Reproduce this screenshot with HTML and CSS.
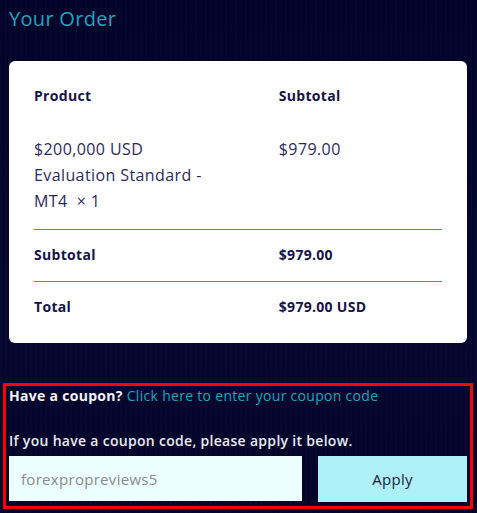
FILE: index.html
```html
<!DOCTYPE html>
<html lang="en">
<head>
  <meta charset="UTF-8" />
  <meta name="viewport" content="width=device-width, initial-scale=1.0"/>
  <title>Your Order</title>
  <link rel="stylesheet" href="styles.css">
</head>
<body>

  <h3 class="order-title">Your Order</h3>

  <div class="order-card">
    <table class="order-table">
      <thead>
        <tr>
          <th class="col-product">Product</th>
          <th class="col-total">Subtotal</th>
        </tr>
      </thead>
      <tbody>
        <tr class="item-row">
          <td>$200,000 USD Evaluation Standard - MT4&nbsp; ×&nbsp;1</td>
          <td>$979.00</td>
        </tr>
      </tbody>
      <tfoot>
        <tr>
          <th>Subtotal</th>
          <td>$979.00</td>
        </tr>
        <tr>
          <th>Total</th>
          <td>$979.00 USD</td>
        </tr>
      </tfoot>
    </table>
  </div>

  <div class="coupon">
    <p class="coupon-toggle">Have a coupon? <a href="#">Click here to enter your coupon code</a></p>
    <p class="coupon-hint">If you have a coupon code, please apply it below.</p>
    <div class="coupon-form">
      <input type="text" placeholder="forexpropreviews5" />
      <button type="button">Apply</button>
    </div>
  </div>

</body>
</html>
```

FILE: styles.css
```css
* { box-sizing: border-box; }

body {
  margin: 0;
  font-family: "Open Sans", sans-serif;
  letter-spacing: 0.3px;
  background: #04042a;
  background-image:
    repeating-linear-gradient(90deg, rgba(255,255,255,0.012) 0 2px, transparent 2px 5px),
    linear-gradient(180deg, #03032a 0%, #05062f 60%, #04042a 100%);
  color: #ffffff;
  min-height: 513px;
}

.order-title {
  margin: 0;
  padding: 4px 9px 0;
  height: 61px;
  font-size: 20px;
  line-height: 30px;
  font-weight: 400;
  color: #19a7bf;
}

.order-card {
  background: #ffffff;
  margin: 0 10px 0 9px;
  padding: 9px 25px 10px;
  border-radius: 6px;
  color: #1b1a50;
}

.order-table {
  width: 100%;
  border-collapse: collapse;
  text-align: left;
}

.order-table th,
.order-table td {
  padding: 13px 0;
  vertical-align: top;
}

.order-table thead th {
  font-size: 14px;
  line-height: 26px;
  font-weight: 700;
  color: #15144a;
}

.col-product { width: 60%; }

.item-row td {
  padding: 14px 0 15px;
  font-size: 16px;
  line-height: 26px;
  letter-spacing: 0.4px;
  color: #2b2a5e;
}

.item-row td:first-child { padding-right: 60px; }

.order-table tfoot th,
.order-table tfoot td {
  border-top: 1px solid #1aa6b8;
  padding: 12px 0 13px;
  font-size: 14px;
  line-height: 26px;
  font-weight: 700;
  color: #15144a;
}

.coupon {
  margin: 40px 4px 0 3px;
  border: 3px solid #ff0000;
  padding: 0 3px 4px;
}

.coupon p {
  margin: 0;
  font-size: 14px;
  line-height: 20px;
}

.coupon-toggle {
  font-weight: 700;
  color: #f2f2f7;
}

.coupon-toggle a {
  color: #19a7bf;
  font-weight: 500;
  text-decoration: none;
}

.coupon-hint {
  margin-top: 25px !important;
  font-weight: 600;
  color: #e9e9f2;
}

.coupon-form {
  display: flex;
  gap: 16px;
  margin-top: 5px;
}

.coupon-form input {
  width: 293px;
  height: 45px;
  border: none;
  background: #ebfffe;
  padding: 0 12px;
  font-family: inherit;
  font-size: 15px;
  letter-spacing: inherit;
  color: #333;
  outline: none;
}

.coupon-form input::placeholder {
  color: #8a8a8e;
}

.coupon-form button {
  flex: 1;
  height: 46px;
  border: none;
  background: #aef0f8;
  font-family: inherit;
  font-size: 15px;
  letter-spacing: inherit;
  color: #1c1b3a;
  cursor: pointer;
}
```
